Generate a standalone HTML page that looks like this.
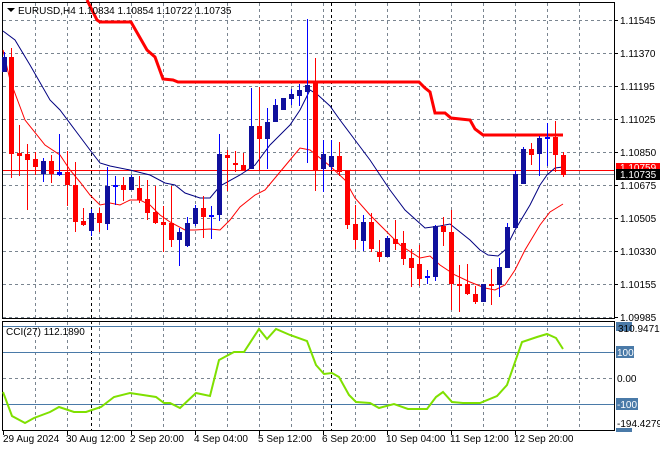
<!DOCTYPE html>
<html><head><meta charset="utf-8"><style>
html,body{margin:0;padding:0;background:#fff;}
svg{display:block;font-family:"Liberation Sans",sans-serif;}
</style></head><body>
<svg width="660" height="450" viewBox="0 0 660 450" xmlns="http://www.w3.org/2000/svg">
<rect width="660" height="450" fill="#fff"/>
<!-- grid main -->
<g stroke="#7a8590" stroke-width="1" stroke-dasharray="3,3">
<path d="M3 20.5H614M3 53.5H614M3 86.5H614M3 119.5H614M3 152.5H614M3 185.5H614M3 218.5H614M3 251.5H614M3 284.5H614M3 317.5H614"/>
<path d="M35.5 3V318M67.5 3V318M99.5 3V318M131.5 3V318M163.5 3V318M195.5 3V318M227.5 3V318M259.5 3V318M291.5 3V318M323.5 3V318M355.5 3V318M387.5 3V318M419.5 3V318M451.5 3V318M483.5 3V318M515.5 3V318M547.5 3V318M579.5 3V318"/>
<path d="M35.5 322V430M67.5 322V430M99.5 322V430M131.5 322V430M163.5 322V430M195.5 322V430M227.5 322V430M259.5 322V430M291.5 322V430M323.5 322V430M355.5 322V430M387.5 322V430M419.5 322V430M451.5 322V430M483.5 322V430M515.5 322V430M547.5 322V430M579.5 322V430"/>
<path d="M3 378.5H614"/>
</g>
<g stroke="#000" stroke-dasharray="3,3"><path d="M91.5 3V430M331.5 3V430"/></g>
<!-- frames -->
<g fill="none" stroke="#000"><rect x="2.5" y="2.5" width="612" height="316"/><rect x="2.5" y="321.5" width="612" height="109"/></g>
<!-- sub levels -->
<g stroke="#4a7aa8"><path d="M3 326.5H614M3 352.5H614M3 404.5H614"/></g>
<!-- price lines -->
<path d="M3 170.5H614" stroke="#f00"/>
<path d="M3 174.5H614" stroke="#8090a0"/>
<!-- red step -->
<polyline fill="none" stroke="#f00" stroke-width="3" points="87,0 97,20 100,22 131,22 147,50 155,57 163,79 173,80 178,82 419,82 425,88 430,92 435,113 445,113 451,118 470,120 475,129 483,135 563,135"/>
<!-- blue MA -->
<polyline fill="none" stroke="#000080" stroke-width="1" points="3,31 15,40 30,65 50,100 60,110 75,130 90,150 100,163 110,166 130,170 150,175 165,183 175,185 185,193 200,198 210,198 220,186 240,175 255,165 270,145 290,125 300,110 310,90 318,95 330,106 340,120 355,140 370,160 380,175 390,190 405,210 425,228 440,226 450,224 460,232 470,240 480,250 488,255 498,256 505,250 515,230 530,205 540,185 547,175 555,168 563,167"/>
<!-- red MA -->
<polyline fill="none" stroke="#f00" stroke-width="1" points="3,50 10,80 25,120 45,145 60,155 70,170 80,182 90,195 100,205 110,203 120,205 130,200 140,200 150,205 160,215 170,222 185,230 195,230 210,229 220,230 230,220 240,207 255,195 265,190 275,178 290,160 300,148 310,150 320,158 330,166 345,180 355,198 370,215 385,230 400,245 420,258 430,256 440,265 455,275 470,282 485,288 495,290 505,285 515,270 525,250 540,225 550,212 563,204"/>
<!-- candles -->
<g stroke-width="1">
<g stroke="#0000ff"><path d="M4.5 52V72M43.5 158V182M59.5 134V176M91.5 209V236M107.5 167V230M115.5 176V205M131.5 175V190M179.5 228V266M187.5 217V247M195.5 205V226M211.5 206V239M219.5 134V221M251.5 88V169M267.5 108V169M275.5 99V122M283.5 98V110M291.5 89V105M299.5 84V106M307.5 19V163M323.5 140V192M331.5 140V170M363.5 215V251M387.5 236V257M427.5 270V284M435.5 225V281M483.5 284V302M499.5 258V297M507.5 223V268M515.5 171V228M523.5 147V184M539.5 136V176M547.5 123V166"/></g>
<g stroke="#f00"><path d="M11.5 48V178M19.5 125V176M27.5 144V210M35.5 152V175M51.5 155V183M67.5 151V206M75.5 162V232M83.5 208V226M99.5 208V232M123.5 177V201M139.5 176V203M147.5 180V220M155.5 186V224M163.5 206V252M171.5 186V247M203.5 196V238M227.5 150V191M235.5 151V172M243.5 153V170M259.5 87V170M315.5 58V191M339.5 142V176M347.5 170V229M355.5 205V249M371.5 213V252M379.5 240V262M395.5 220V250M403.5 231V265M411.5 249V287M419.5 245V286M443.5 217V246M451.5 210V310M459.5 265V312M467.5 264V295M475.5 286V304M491.5 269V305M531.5 143V165M555.5 121V172M563.5 152V177"/></g>
</g>
<g fill="#10109c">
<rect x="2" y="57" width="5" height="15"/><rect x="41" y="161" width="5" height="13"/><rect x="57" y="172" width="5" height="3" fill="#0000ff"/><rect x="89" y="213" width="5" height="18"/><rect x="105" y="186" width="5" height="38"/><rect x="113" y="185" width="5" height="2" fill="#0000ff"/><rect x="129" y="177" width="5" height="13"/><rect x="177" y="232" width="5" height="8"/><rect x="185" y="223" width="5" height="23"/><rect x="193" y="208" width="5" height="16"/><rect x="209" y="215" width="5" height="2" fill="#0000ff"/><rect x="217" y="154" width="5" height="61"/><rect x="249" y="126" width="5" height="43"/><rect x="265" y="122" width="5" height="17"/><rect x="273" y="105" width="5" height="17"/><rect x="281" y="98" width="5" height="12"/><rect x="289" y="94" width="5" height="5"/><rect x="297" y="90" width="5" height="6"/><rect x="305" y="85" width="5" height="7"/><rect x="321" y="154" width="5" height="15"/><rect x="329" y="156" width="5" height="11"/><rect x="361" y="222" width="5" height="19"/><rect x="385" y="238" width="5" height="19"/><rect x="425" y="276" width="5" height="2" fill="#0000ff"/><rect x="433" y="226" width="5" height="51"/><rect x="481" y="284" width="5" height="18"/><rect x="497" y="267" width="5" height="18"/><rect x="505" y="227" width="5" height="41"/><rect x="513" y="174" width="5" height="54"/><rect x="521" y="149" width="5" height="35"/><rect x="537" y="138" width="5" height="16"/><rect x="545" y="137" width="5" height="2" fill="#0000ff"/>
</g>
<g fill="#f00">
<rect x="9" y="57" width="5" height="97"/><rect x="17" y="153" width="5" height="3"/><rect x="25" y="154" width="5" height="6"/><rect x="33" y="159" width="5" height="8"/><rect x="49" y="161" width="5" height="13"/><rect x="65" y="172" width="5" height="13"/><rect x="73" y="185" width="5" height="37"/><rect x="81" y="221" width="5" height="4"/><rect x="97" y="213" width="5" height="10"/><rect x="121" y="185" width="5" height="5"/><rect x="137" y="188" width="5" height="12"/><rect x="145" y="199" width="5" height="14"/><rect x="153" y="212" width="5" height="11"/><rect x="161" y="222" width="5" height="3"/><rect x="169" y="223" width="5" height="17"/><rect x="201" y="208" width="5" height="9"/><rect x="225" y="155" width="5" height="3"/><rect x="233" y="163" width="5" height="2"/><rect x="241" y="165" width="5" height="5"/><rect x="257" y="126" width="5" height="13"/><rect x="313" y="83" width="5" height="87"/><rect x="337" y="156" width="5" height="16"/><rect x="345" y="170" width="5" height="55"/><rect x="353" y="224" width="5" height="16"/><rect x="369" y="222" width="5" height="27"/><rect x="377" y="252" width="5" height="5"/><rect x="393" y="239" width="5" height="5"/><rect x="401" y="243" width="5" height="16"/><rect x="409" y="258" width="5" height="10"/><rect x="417" y="264" width="5" height="15"/><rect x="441" y="226" width="5" height="6"/><rect x="449" y="232" width="5" height="52"/><rect x="457" y="284" width="5" height="2"/><rect x="465" y="284" width="5" height="10"/><rect x="473" y="294" width="5" height="8"/><rect x="489" y="284" width="5" height="2"/><rect x="529" y="149" width="5" height="6"/><rect x="553" y="137" width="5" height="18"/><rect x="561" y="155" width="5" height="20"/>
</g>
<!-- CCI -->
<polyline fill="none" stroke="#7fe000" stroke-width="2" points="3,392 12,416 25,423 34,418 50,412 59,407 74,412 86,412 101,407 114,397 130,393 156,397 164,403 170,403 180,408 196,393 210,396 219,360 234,352 244,352 259,329 267,339 276,329 290,335 307,341 316,365 324,374 332,373 339,377 349,395 356,402 370,403 379,408 394,404 408,409 427,409 436,397 443,392 452,402 463,403 480,403 497,396 507,385 522,342 537,337 547,334 556,338 563,349"/>
<!-- header text -->
<path d="M7 8h8l-4 4z" fill="#000"/>
<text x="18" y="14" font-size="10" fill="#000">EURUSD,H4  1.10834 1.10854 1.10722 1.10735</text>
<text x="6" y="335" font-size="10" fill="#000">CCI(27) 112.1890</text>
<!-- axis ticks -->
<g stroke="#000"><path d="M614 20.5h4M614 53.5h4M614 86.5h4M614 119.5h4M614 152.5h4M614 185.5h4M614 218.5h4M614 251.5h4M614 284.5h4M614 317.5h4"/></g>
<g font-size="10" fill="#000">
<text x="620" y="24">1.11545</text><text x="620" y="57">1.11370</text><text x="620" y="90">1.11195</text><text x="620" y="123">1.11025</text><text x="620" y="156">1.10850</text><text x="620" y="189">1.10675</text><text x="620" y="222">1.10505</text><text x="620" y="255">1.10330</text><text x="620" y="288">1.10155</text><text x="620" y="321">1.09985</text>
</g>
<rect x="616" y="163" width="44" height="8" fill="#f00"/>
<text x="620" y="171" font-size="10" fill="#fff">1.10759</text>
<rect x="616" y="169" width="44" height="11" fill="#000"/>
<text x="620" y="178" font-size="10" fill="#fff">1.10735</text>
<!-- sub labels -->
<rect x="616" y="322" width="16" height="9" fill="#4a7aa8"/>
<text x="618" y="332" font-size="10" fill="#000">310.9471</text>
<rect x="616" y="346" width="18" height="12" fill="#4a7aa8"/>
<text x="617" y="356" font-size="10" fill="#fff">100</text>
<text x="617" y="382" font-size="10" fill="#000">0.00</text>
<rect x="616" y="398" width="22" height="12" fill="#4a7aa8"/>
<text x="617" y="408" font-size="10" fill="#fff">-100</text>
<rect x="616" y="428" width="16" height="4" fill="#4a7aa8"/>
<text x="617" y="427" font-size="10" fill="#000">-194.4279</text>
<!-- dates -->
<g stroke="#000"><path d="M3.5 431v4M67.5 431v4M131.5 431v4M195.5 431v4M259.5 431v4M323.5 431v4M387.5 431v4M451.5 431v4M515.5 431v4"/></g>
<g font-size="10" fill="#000">
<text x="3" y="442">29 Aug 2024</text><text x="66" y="442">30 Aug 12:00</text><text x="130" y="442">2 Sep 20:00</text><text x="194" y="442">4 Sep 04:00</text><text x="258" y="442">5 Sep 12:00</text><text x="322" y="442">6 Sep 20:00</text><text x="386" y="442">10 Sep 04:00</text><text x="450" y="442">11 Sep 12:00</text><text x="514" y="442">12 Sep 20:00</text>
</g>
</svg>
</body></html>
